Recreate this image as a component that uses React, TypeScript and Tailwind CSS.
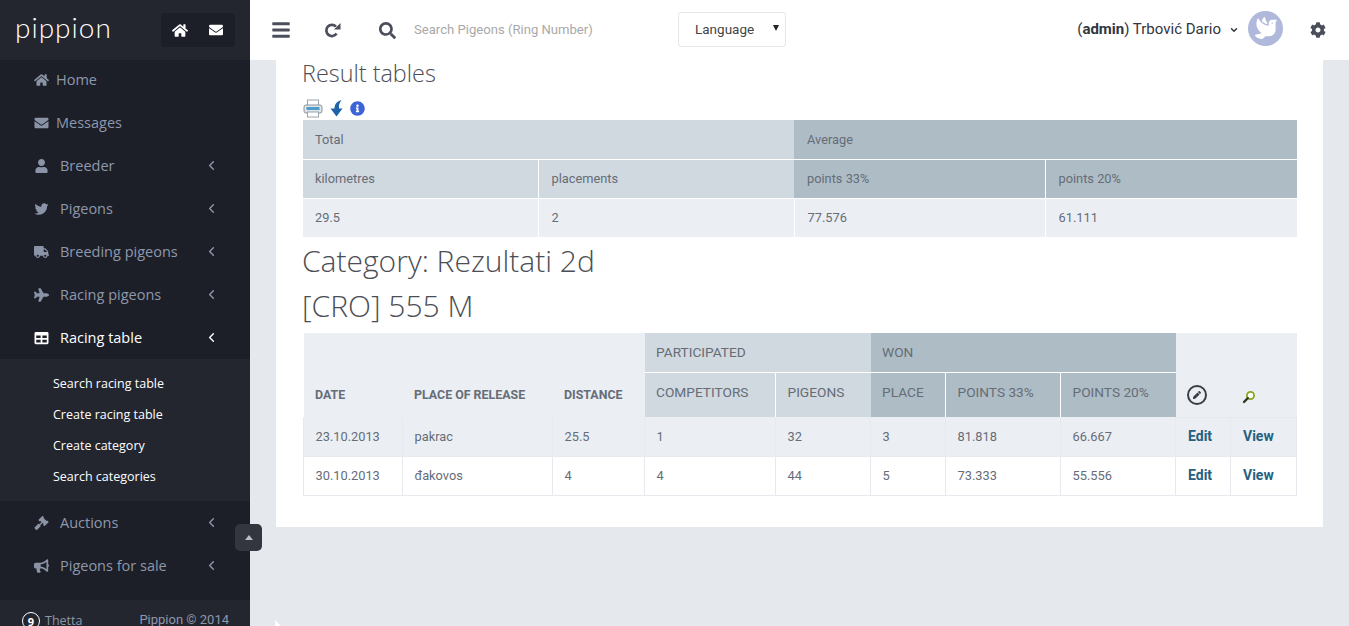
import {
  FaBars,
  FaBullhorn,
  FaCog,
  FaDove,
  FaEnvelope,
  FaGavel,
  FaHome,
  FaInfoCircle,
  FaPen,
  FaPlane,
  FaSearch,
  FaTable,
  FaTruck,
  FaTwitter,
  FaUser,
} from "react-icons/fa";
import { ChevronDown, ChevronLeft } from "lucide-react";
import type { ComponentType } from "react";

type MenuItem = {
  label: string;
  icon: ComponentType<{ className?: string }>;
  arrow?: boolean;
  active?: boolean;
  wide?: boolean;
};

const topItems: MenuItem[] = [
  { label: "Home", icon: FaHome },
  { label: "Messages", icon: FaEnvelope },
  { label: "Breeder", icon: FaUser, arrow: true, wide: true },
  { label: "Pigeons", icon: FaTwitter, arrow: true, wide: true },
  { label: "Breeding pigeons", icon: FaTruck, arrow: true, wide: true },
  { label: "Racing pigeons", icon: FaPlane, arrow: true, wide: true },
  { label: "Racing table", icon: FaTable, arrow: true, active: true, wide: true },
];

const bottomItems: MenuItem[] = [
  { label: "Auctions", icon: FaGavel, arrow: true, wide: true },
  { label: "Pigeons for sale", icon: FaBullhorn, arrow: true, wide: true },
];

const subItems = ["Search racing table", "Create racing table", "Create category", "Search categories"];

const races = [
  ["23.10.2013", "pakrac", "25.5", "1", "32", "3", "81.818", "66.667"],
  ["30.10.2013", "đakovos", "4", "4", "44", "5", "73.333", "55.556"],
];

function MenuRow({ item }: { item: MenuItem }) {
  const Icon = item.icon;
  return (
    <div className={`flex h-[43px] items-center pl-[34px] pr-[31px] text-[14.5px] ${item.active ? "text-white" : "text-[#8f97ab]"}`}>
      <Icon className={`h-[14px] w-[15px] shrink-0 ${item.active ? "text-white" : "text-[#8b93a7]"}`} />
      <span className={`flex-1 ${item.wide ? "ml-[11px]" : "ml-[7px]"} ${item.active ? "font-medium" : ""}`}>{item.label}</span>
      {item.arrow && <ChevronLeft className="h-[15px] w-[15px]" strokeWidth={2.25} />}
    </div>
  );
}

function Sidebar() {
  return (
    <aside className="relative flex h-full w-[250px] shrink-0 flex-col bg-[#1c1f28] font-['Open_Sans',sans-serif]">
      <div className="-mb-[2px] flex h-[60px] items-center justify-between bg-[#23262f] pl-[15px] pr-[15px]">
        <span className="pb-[6px] font-['Lato',sans-serif] text-[28px] font-light leading-none tracking-[1px] text-white">pippion</span>
        <div className="flex h-[34px] w-[74px] items-center justify-between rounded-sm bg-[#1c1f28] px-[11px] text-white">
          <FaHome className="h-[15px] w-[16px]" />
          <FaEnvelope className="h-[14px] w-[16px]" />
        </div>
      </div>
      {topItems.map((item) => (
        <MenuRow key={item.label} item={item} />
      ))}
      <div className="flex h-[142px] flex-col justify-center gap-[10px] bg-[#23262f] pl-[53px] text-[12.5px] leading-[21px] text-white">
        {subItems.map((label) => (
          <div key={label}>{label}</div>
        ))}
      </div>
      {bottomItems.map((item) => (
        <MenuRow key={item.label} item={item} />
      ))}
      <div className="mt-auto flex h-[26px] items-start justify-between bg-[#23262f] pl-[22px] pr-[21px] pt-[12px] text-[12.5px] leading-[16px] text-[#8f97ab]">
        <div className="flex items-center gap-[5px]">
          <span className="flex h-[18px] w-[18px] items-center justify-center rounded-full border border-white text-[11px] font-bold leading-none text-white">9</span>
          <span>Thetta</span>
        </div>
        <span className="font-['Roboto',sans-serif] text-[13px]">Pippion © 2014</span>
      </div>
      <div className="absolute left-[235px] top-[524px] flex h-[27px] w-[27px] items-center justify-center rounded-[5px] bg-[#33363f]">
        <div className="h-0 w-0 border-x-[4px] border-b-[5px] border-x-transparent border-b-[#b9bdc6]" />
      </div>
    </aside>
  );
}

function Header() {
  return (
    <header className="flex h-[60px] shrink-0 items-center bg-white text-[#4b4e5b]">
      <FaBars className="ml-[21px] h-[20px] w-[20px]" />
      <svg width="17" height="17" viewBox="0 0 17 17" className="ml-[33px]">
        <path d="M12.6 11.6 A5.6 5.6 0 1 1 12 4.6" fill="none" stroke="currentColor" strokeWidth="2.7" />
        <path d="M10 7.5 H16.5 V1 Z" fill="currentColor" />
      </svg>
      <FaSearch className="ml-[38px] h-[17px] w-[17px]" />
      <span className="ml-[18px] w-[264px] font-['Roboto',sans-serif] text-[13.1px] text-[#a9a9a9]">Search Pigeons (Ring Number)</span>
      <div className="relative -mt-[1px] flex h-[35px] w-[108px] items-center rounded-[3px] border border-[#e6e6e6] pl-[16px] font-['Roboto',sans-serif] text-[13.5px] text-[#444]">
        Language
        <div className="absolute right-[6px] top-[12px] h-0 w-0 border-x-[3.5px] border-t-[6px] border-x-transparent border-t-[#222]" />
      </div>
      <div className="ml-auto flex items-center font-['Roboto',sans-serif] text-[15px] text-[#33353f]">
        <span className="-mt-[2px]">
          (<b className="font-bold">admin</b>) Trbović Dario
        </span>
        <ChevronDown className="ml-[8px] h-[10px] w-[10px]" strokeWidth={3.5} />
        <span className="-mt-[4px] ml-[9px] flex h-[35px] w-[35px] items-center justify-center rounded-full bg-[#b0b9dc] text-white">
          <FaDove className="h-[22px] w-[22px]" />
        </span>
        <FaCog className="ml-[27px] mr-[23px] h-[16px] w-[16px] text-[#4b4e5b]" />
      </div>
    </header>
  );
}

function SummaryTable() {
  return (
    <table className="w-[994px] table-fixed border-collapse font-['Roboto',sans-serif] text-[12.8px] text-[#666c78]">
      <colgroup>
        <col className="w-[235px]" />
        <col className="w-[256px]" />
        <col className="w-[251px]" />
        <col className="w-[252px]" />
      </colgroup>
      <tbody>
        <tr className="h-[39px]">
          <td colSpan={2} className="border-b border-white bg-[#d0d9df] px-[12px]">Total</td>
          <td colSpan={2} className="border-b border-white bg-[#aebdc5] px-[13px]">Average</td>
        </tr>
        <tr className="h-[39px]">
          <td className="border-r border-b border-white bg-[#d0d9df] px-[12px]">kilometres</td>
          <td className="border-b border-white bg-[#d0d9df] px-[13px]">placements</td>
          <td className="border-r border-b border-white bg-[#aebdc5] px-[13px]">points 33%</td>
          <td className="border-b border-white bg-[#aebdc5] px-[13px]">points 20%</td>
        </tr>
        <tr className="h-[39px] bg-[#ebeff4]">
          <td className="border-r border-white px-[12px]">29.5</td>
          <td className="border-r border-white px-[13px]">2</td>
          <td className="border-r border-white px-[13px]">77.576</td>
          <td className="px-[13px]">61.111</td>
        </tr>
      </tbody>
    </table>
  );
}

function RacesTable() {
  const lightHead = "bg-[#d0d9df] px-[11.5px] align-middle font-normal text-[#666c78]";
  const darkHead = "bg-[#aebdc5] px-[11.5px] align-middle font-normal text-[#666c78]";
  const plainHead = "bg-[#ebeff4] px-[11.5px] pb-[12px] align-bottom text-left text-[12.4px] font-bold text-[#666c78]";
  return (
    <table className="w-[993px] table-fixed border-collapse font-['Roboto',sans-serif] text-[12.8px] text-[#666c78]">
      <colgroup>
        <col className="w-[99px]" />
        <col className="w-[150px]" />
        <col className="w-[92px]" />
        <col className="w-[131px]" />
        <col className="w-[95px]" />
        <col className="w-[75px]" />
        <col className="w-[115px]" />
        <col className="w-[115px]" />
        <col className="w-[55px]" />
        <col className="w-[66px]" />
      </colgroup>
      <thead>
        <tr className="h-[39px] text-left text-[13.7px]">
          <th rowSpan={2} className={plainHead}>DATE</th>
          <th rowSpan={2} className={plainHead}>PLACE OF RELEASE</th>
          <th rowSpan={2} className={plainHead}>DISTANCE</th>
          <th colSpan={2} className={`${lightHead} border-b border-white pt-[1px]`}>PARTICIPATED</th>
          <th colSpan={3} className={`${darkHead} border-b border-white pt-[1px]`}>WON</th>
          <th rowSpan={2} className={plainHead}>
            <span className="flex h-[20px] w-[20px] items-center justify-center rounded-full border-2 border-[#3a3d45] text-[#3a3d45]">
              <FaPen className="h-[8px] w-[8px]" />
            </span>
          </th>
          <th rowSpan={2} className={plainHead}>
            <svg width="14" height="14" viewBox="0 0 14 14" className="mb-[1px]">
              <circle cx="8.5" cy="5.5" r="3.6" fill="#fff" stroke="#8aa51e" strokeWidth="1.8" />
              <path d="M5.8 8.2 2 12" stroke="#2f3a22" strokeWidth="2.4" strokeLinecap="round" />
            </svg>
          </th>
        </tr>
        <tr className="h-[45px] text-left text-[13.7px]">
          <th className={`${lightHead} border-r border-white pb-[4px]`}>COMPETITORS</th>
          <th className={`${lightHead} pb-[4px]`}>PIGEONS</th>
          <th className={`${darkHead} border-r border-white pb-[4px]`}>PLACE</th>
          <th className={`${darkHead} border-r border-white pb-[4px]`}>POINTS 33%</th>
          <th className={`${darkHead} pb-[4px]`}>POINTS 20%</th>
        </tr>
      </thead>
      <tbody>
        {races.map((race, i) => (
          <tr key={race[0]} className={`h-[39px] ${i === 0 ? "bg-[#ebeff4]" : "bg-white"}`}>
            {race.map((cell, j) => (
              <td key={j} className={`border border-[#e6eaee] px-[11.5px] ${i === 0 ? "border-t-0" : ""}`}>
                {cell}
              </td>
            ))}
            <td className="border border-[#e6eaee] px-[12px] text-[14px] font-bold text-[#25607f]">Edit</td>
            <td className="border border-[#e6eaee] px-[12px] text-[14px] font-bold text-[#25607f]">View</td>
          </tr>
        ))}
      </tbody>
    </table>
  );
}

export default function App() {
  return (
    <div className="flex h-[626px] w-[1349px] overflow-hidden bg-[#e5e8ec]">
      <Sidebar />
      <div className="relative flex min-w-0 flex-1 flex-col">
        <Header />
        <main className="ml-[26px] mr-[26px] h-[467px] bg-white px-[27px] font-['Open_Sans',sans-serif] text-[#4b4e55]">
          <h3 className="-ml-[1px] text-[23.4px] font-light leading-[26px]">Result tables</h3>
          <div className="mb-[2px] mt-[12px] flex h-[20px] items-center gap-[7px]">
            <svg width="20" height="19" viewBox="0 0 20 19">
              <rect x="4.5" y="1" width="11" height="6" fill="#fff" stroke="#9aa3ab" />
              <rect x="1" y="6" width="18" height="8" rx="2" fill="#dfe5ea" stroke="#8b949c" />
              <rect x="3.5" y="8" width="13" height="3" fill="#4d9cc9" />
              <rect x="4.5" y="13" width="11" height="5" fill="#fff" stroke="#9aa3ab" />
            </svg>
            <svg width="13" height="17" viewBox="0 0 13 17">
              <path d="M11.5 0 C6 1.5 4.5 5 4.5 8.5 H0.5 L6.5 16.5 L12.5 8.5 H9 C8.6 5 9.5 2.5 11.5 0 Z" fill="#1f62a8" />
            </svg>
            <FaInfoCircle className="h-[15px] w-[15px] text-[#3c64d8]" />
          </div>
          <SummaryTable />
          <h2 className="-ml-[1px] mt-[5px] text-[30px] font-light leading-[38px]">Category: Rezultati 2d</h2>
          <h2 className="-ml-[1px] mt-[7px] text-[30px] font-light leading-[38px]">[CRO] 555 M</h2>
          <div className="mt-[8px]">
            <RacesTable />
          </div>
        </main>
        <div className="absolute -bottom-[6px] left-[25px] h-0 w-0 border-y-[6px] border-l-[6px] border-y-transparent border-l-white" />
      </div>
    </div>
  );
}
